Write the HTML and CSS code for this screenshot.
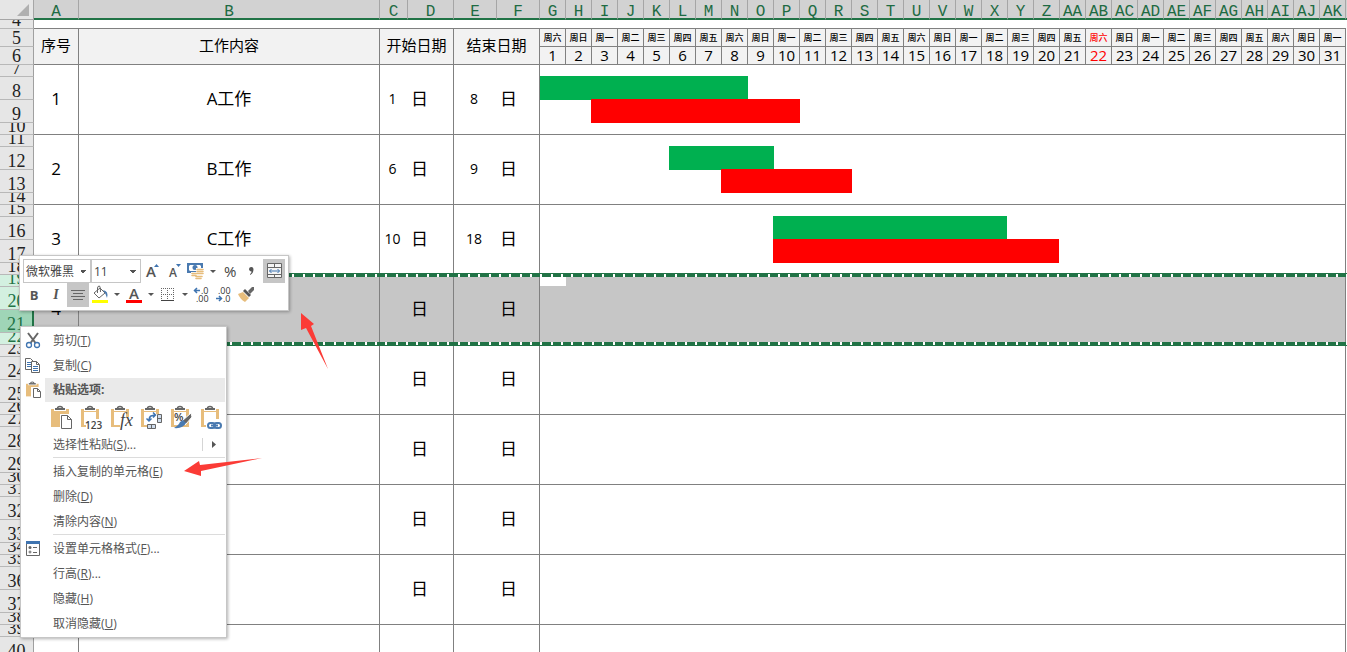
FILE: index.html
```html
<!DOCTYPE html>
<html lang="zh-CN">
<head>
    <meta charset="UTF-8">
    <title>工作计划</title>
    <link rel="stylesheet" href="styles.css">
</head>
<body>
    <div class="sheet-area">
        <table class="sheet" id="sheet">
            <colgroup id="cols">
                <col class="col-head">
                <col class="col-a">
                <col class="col-b">
                <col class="col-c">
                <col class="col-d">
                <col class="col-e">
                <col class="col-f">
            </colgroup>
            <thead>
                <tr class="letters" id="letters">
                    <th class="corner"><svg width="12" height="12"><path d="M12 0V12H0Z" fill="#b0b0b0"/></svg></th>
                </tr>
                <tr class="r9">
                    <th class="num"><div>4</div></th>
                    <td class="blank" colspan="37"></td>
                    <td class="gutter"></td>
                </tr>
                <tr class="r18" id="weekdays">
                    <th class="num"><div>5</div></th>
                    <th class="title" rowspan="2">序号</th>
                    <th class="title" rowspan="2">工作内容</th>
                    <th class="title" rowspan="2" colspan="2">开始日期</th>
                    <th class="title" rowspan="2" colspan="2">结束日期</th>
                </tr>
                <tr class="r18" id="days">
                    <th class="num"><div>6</div></th>
                </tr>
            </thead>
        </table>
    </div>

    <div class="toolbar">
        <div class="tool-row">
            <select class="font-name" aria-label="字体"><option>微软雅黑</option></select>
            <select class="font-size" aria-label="字号"><option>11</option></select>
            <button type="button" aria-label="增大字号">
                <svg width="22" height="24"><text x="5" y="18" font-size="15" font-weight="600" fill="#555">A</text><path d="M13 8L15.500 5L18 8Z" fill="#3f74b0"/></svg>
            </button>
            <button type="button" aria-label="减小字号">
                <svg width="22" height="24"><text x="6" y="18" font-size="12" font-weight="600" fill="#555">A</text><path d="M13 5H18L15.500 8Z" fill="#3f74b0"/></svg>
            </button>
            <button type="button" aria-label="会计数字格式">
                <svg width="22" height="24">
                    <path d="M3 5H17V13H3Z" fill="#fff" stroke="#4a7ab0" stroke-width="2"/>
                    <path d="M3 5H6L3 8ZM17 5H14L17 8ZM3 13V10L6 13Z" fill="#4a7ab0"/>
                    <circle cx="10" cy="8.500" r="2.500" fill="#4a7ab0"/>
                    <path d="M11 9H20V21H6V13H11Z" fill="#fff"/>
                    <path d="M12 10.500H18M12 12.500H18M12 14.500H18M7 14.500H11M7 16.500H11M11 17.500H17M11 19.500H16" stroke="#e7bd7c" stroke-width="1.600" stroke-linecap="round"/>
                </svg>
            </button>
            <button type="button" class="drop" aria-label="更多数字格式"><svg width="12" height="24"><path d="M3 11H9L6 14Z" fill="#555"/></svg></button>
            <button type="button" aria-label="百分比"><svg width="22" height="24"><text x="5" y="18" font-size="15" font-weight="500" fill="#444">%</text></svg></button>
            <button type="button" aria-label="千位分隔"><svg width="22" height="24"><path d="M8 10.500A2.200 2.200 0 0 1 12.500 10C12.500 13 11.500 15 9 16V15C10 14.500 10.500 13.500 10.500 12.500Q8.500 12.500 8 10.500" fill="#555"/></svg></button>
            <button type="button" class="on" aria-label="合并后居中">
                <svg width="22" height="24"><path d="M4.500 4.500H18.500V18.500H4.500ZM4.500 8.500H18.500M4.500 15.500H18.500M11.500 4V8M11.500 16V18" fill="#f4f4f4" stroke="#666"/><path d="M6.500 12H16.500M8.500 10L6.500 12L8.500 14M14.500 10L16.500 12L14.500 14" fill="none" stroke="#3f74b0"/></svg>
            </button>
        </div>
        <div class="tool-row">
            <button type="button" class="bold">B</button>
            <button type="button" class="italic">I</button>
            <button type="button" class="on" aria-label="居中"><svg width="22" height="24"><path d="M4 7.500H18M6 10.500H16M4 13.500H18M6 16.500H16" stroke="#666"/></svg></button>
            <button type="button" aria-label="填充颜色">
                <svg width="22" height="24"><path d="M5 10L11 5L16 10L10 15Z" fill="#fff" stroke="#666"/><path d="M8.500 10V5Q8.500 3 10.500 3Q11.500 3.500 11.500 9" fill="none" stroke="#666"/><path d="M14 7Q20 8 18 15L16.500 11Z" fill="#4a7ab0"/><path d="M3 17H19V20H3Z" fill="#ff0"/></svg>
            </button>
            <button type="button" class="drop" aria-label="更多填充颜色"><svg width="12" height="24"><path d="M3 10H9L6 13Z" fill="#555"/></svg></button>
            <button type="button" aria-label="字体颜色"><svg width="22" height="24"><text x="6" y="16" font-size="15" font-weight="600" fill="#555">A</text><path d="M3 17H19V20H3Z" fill="red"/></svg></button>
            <button type="button" class="drop" aria-label="更多字体颜色"><svg width="12" height="24"><path d="M3 10H9L6 13Z" fill="#555"/></svg></button>
            <button type="button" aria-label="边框"><svg width="22" height="24"><path d="M4.500 5V17M10.500 5V17M16.500 5V17M4 5.500H17M4 11.500H17" stroke="#666" stroke-dasharray="1 1"/><path d="M4 17.500H17" stroke="#444"/></svg></button>
            <button type="button" class="drop" aria-label="更多边框"><svg width="12" height="24"><path d="M3 10H9L6 13Z" fill="#555"/></svg></button>
            <button type="button" aria-label="增加小数位"><svg width="22" height="24"><path d="M3 7.500H9M6 5L3.500 7.500L6 10" fill="none" stroke="#3f74b0" stroke-width="1.500"/><text x="10" y="11" font-size="9" fill="#333">.0</text><text x="5" y="19" font-size="9" fill="#333">.00</text></svg></button>
            <button type="button" aria-label="减少小数位"><svg width="22" height="24"><text x="5" y="11" font-size="9" fill="#333">.00</text><path d="M3 15.500H9M6 13L8.500 15.500L6 18" fill="none" stroke="#3f74b0" stroke-width="1.500"/><text x="10" y="19" font-size="9" fill="#333">.0</text></svg></button>
            <button type="button" aria-label="格式刷">
                <svg width="22" height="24"><path d="M3 11L8 9L14 15L10 19Q5 16 3 11" fill="#e7bd7c"/><path d="M8 8L10 6L16 12L14 14Z" fill="#555"/><path d="M13 8L17 4H19V7L15 11Z" fill="#666"/></svg>
            </button>
        </div>
    </div>

    <div class="menu">
        <button type="button" class="item">
            <svg class="icon" width="24" height="24"><path d="M7 4L14.500 14M17 4L9.500 14" stroke="#666" stroke-width="2"/><circle cx="8" cy="16" r="2.500" fill="none" stroke="#3f74b0" stroke-width="1.300"/><circle cx="16" cy="16" r="2.500" fill="none" stroke="#3f74b0" stroke-width="1.300"/></svg>
            <span>剪切(<u>T</u>)</span>
        </button>
        <button type="button" class="item">
            <svg class="icon" width="24" height="24"><path d="M4.500 4.500H9.500L12.500 7.500V15.500H4.500Z" fill="#fff" stroke="#666"/><path d="M6 8.500H10M6 10.500H10M6 12.500H10" stroke="#3f74b0"/><path d="M10.500 7.500H15.500L18.500 10.500V18.500H10.500Z" fill="#fff" stroke="#666"/><path d="M15.500 7.500V10.500H18" fill="none" stroke="#666"/><path d="M12 12.500H17M12 14.500H17M12 16.500H17" stroke="#3f74b0"/></svg>
            <span>复制(<u>C</u>)</span>
        </button>
        <div class="caption">
            <svg class="icon" width="24" height="24"><use href="#board" transform="translate(5 3) scale(.7)"/><path d="M10 9H20V20H10Z" fill="#fff"/><path d="M12.500 10.500H16.500L19.500 13.500V19.500H12.500Z" fill="#fff" stroke="#666"/><path d="M16.500 10.500V13.500H19" fill="none" stroke="#666"/></svg>
            <span>粘贴选项:</span>
        </div>
        <div class="paste">
            <button type="button" aria-label="粘贴"><svg width="24" height="26">
                <g id="board"><path d="M0 4H18V22H0Z" fill="#e7bd7c"/><path d="M3 2H15V6H3Z" fill="#fff"/><path d="M4 3H14V5H4Z" fill="#666"/><path d="M6.500 3.500Q6.500 1.500 9 1.500Q11.500 1.500 11.500 3.500" fill="none" stroke="#666" stroke-width="1.500"/></g>
                <path d="M9 9H24V26H9Z" fill="#fff"/><path d="M10.500 10.500H16.500L20.500 14.500V23.500H10.500ZM16.500 10.500V14.500H20.500" fill="#fff" stroke="#666"/></svg></button>
            <button type="button" aria-label="值"><svg width="24" height="26"><use href="#board"/><path d="M3 7H15V20H3Z" fill="#fff"/><path d="M5 14H24V26H5Z" fill="#fff"/><text x="4" y="24" font-size="10" font-weight="600" fill="#444">123</text></svg></button>
            <button type="button" aria-label="公式"><svg width="24" height="26"><use href="#board"/><path d="M3 7H15V20H3Z" fill="#fff"/><path d="M9 12H24V26H9Z" fill="#fff"/><text class="fx" x="9" y="21" font-size="18" fill="#444">fx</text></svg></button>
            <button type="button" aria-label="转置"><svg width="24" height="26"><use href="#board"/><path d="M3 7H15V20H3Z" fill="#fff"/><path d="M6 9H24V26H6Z" fill="#fff"/><path d="M16.500 9.500H20.500V17.500H16.500ZM16.500 13.500H20.500M6.500 19.500H14.500V23.500H6.500ZM10.500 19.500V23.500" fill="#cfdcec" stroke="#666"/><path d="M14 10L10 11Q8 12 8 16M12 7.500L14.500 10L12 12.500M5.500 13.500L8 16L10.500 13.500" fill="none" stroke="#3f74b0" stroke-width="1.500"/></svg></button>
            <button type="button" aria-label="格式"><svg width="24" height="26"><use href="#board"/><path d="M3 7H15V20H3Z" fill="#fff"/><text x="3" y="16" font-size="11" font-weight="600" fill="#444">%</text><path d="M20 8L21 12L15 19L11 16Z" fill="#666" stroke="#fff"/><path d="M12 15L15 18Q12 24 3 23Q8 20 9 17Z" fill="#4a7ab0"/></svg></button>
            <button type="button" aria-label="粘贴链接"><svg width="24" height="26"><use href="#board"/><path d="M3 7H15V20H3Z" fill="#fff"/><path d="M5 14H24V26H5Z" fill="#fff"/><g fill="none" stroke="#4a7ab0" stroke-width="2"><rect x="7" y="18" width="7" height="5" rx="2.500"/><rect x="13" y="18" width="7" height="5" rx="2.500"/><path d="M10 20.500H17"/></g></svg></button>
        </div>
        <button type="button" class="item more">
            <span>选择性粘贴(<u>S</u>)...</span>
            <svg class="sub" width="24" height="13"><path d="M0.500 0V13" stroke="#d5d5d5"/><path d="M10 3L14 6.500L10 10Z" fill="#555"/></svg>
        </button>
        <div class="line"></div>
        <button type="button" class="item"><span>插入复制的单元格(<u>E</u>)</span></button>
        <button type="button" class="item"><span>删除(<u>D</u>)</span></button>
        <button type="button" class="item"><span>清除内容(<u>N</u>)</span></button>
        <div class="line"></div>
        <button type="button" class="item">
            <svg class="icon" width="24" height="24"><path d="M5.500 4.500H18.500V18.500H5.500Z" fill="#fff" stroke="#666"/><path d="M5 4H19V7H5Z" fill="#3f74b0"/><circle cx="9" cy="10.500" r="1.500" fill="#666"/><circle cx="9" cy="15" r="1" fill="none" stroke="#666"/><path d="M12 10.500H16M12 15.500H16" stroke="#666"/></svg>
            <span>设置单元格格式(<u>F</u>)...</span>
        </button>
        <button type="button" class="item"><span>行高(<u>R</u>)...</span></button>
        <button type="button" class="item"><span>隐藏(<u>H</u>)</span></button>
        <button type="button" class="item"><span>取消隐藏(<u>U</u>)</span></button>
    </div>

    <svg class="arrow arrow-up" width="30" height="58"><path d="M1 1L14 12L11 14L28 57L6 16L1 18Z" fill="#fb3b36"/></svg>
    <svg class="arrow arrow-left" width="80" height="22"><path d="M0 14L15 4L16 8L78 1L17 14L17 19Z" fill="#fb3b36"/></svg>

    <script>
        const week = ["六", "日", "一", "二", "三", "四", "五"];
        const tasks = [
            { no: 1, name: "A工作", start: 1, end: 8, unit: "日", plan: [1, 8], real: [3, 10] },
            { no: 2, name: "B工作", start: 6, end: 9, unit: "日", plan: [6, 9], real: [8, 12] },
            { no: 3, name: "C工作", start: 10, end: 18, unit: "日", plan: [10, 18], real: [10, 20] },
            { no: 4, unit: "日", selected: true },
            { unit: "日" },
            { unit: "日" },
            { unit: "日" },
            { unit: "日" },
            {}
        ];
        const heights = ["r12", "r23", "r23", "r12"];

        // Column letters, A to AK
        function letter(i) {
            return (i >= 26 ? "A" : "") + String.fromCharCode(65 + i % 26);
        }

        let letters = "";
        for (let i = 0; i < 37; i++) {
            letters += `<th>${letter(i)}</th>`;
        }
        document.getElementById("letters").insertAdjacentHTML("beforeend", letters + `<th class="gutter"></th>`);

        // Calendar header
        let cols = "", weekdays = "", days = "";
        for (let d = 1; d <= 31; d++) {
            const today = d === 22 ? " today" : "";
            cols += `<col>`;
            weekdays += `<th class="week${today}">周${week[(d - 1) % 7]}</th>`;
            days += `<th class="day${today}">${d}</th>`;
        }
        document.getElementById("cols").insertAdjacentHTML("beforeend", cols + `<col class="col-gutter">`);
        document.getElementById("weekdays").insertAdjacentHTML("beforeend", weekdays);
        document.getElementById("days").insertAdjacentHTML("beforeend", days);

        function bar(type, range) {
            return range ? `<div class="bar ${type}" style="grid-column: ${range[0]} / ${range[1] + 1}"></div>` : "";
        }

        // Each task takes four sheet rows, the last one runs off the window
        tasks.forEach((task, i) => {
            const rowClasses = i === tasks.length - 1 ? heights.slice(0, 2) : heights;
            const span = rowClasses.length;
            let rows = "";
            rowClasses.forEach((h, k) => {
                const n = 7 + i * 4 + k;
                rows += `<tr class="${h}"><th class="num${n === 21 ? " current" : ""}"><div>${n}</div></th>`;
                if (k === 0) {
                    rows += `<td rowspan="${span}">${task.no || ""}</td>
                        <td rowspan="${span}">${task.name || ""}</td>
                        <td rowspan="${span}" class="date">${task.start || ""}</td>
                        <td rowspan="${span}" class="unit">${task.unit || ""}</td>
                        <td rowspan="${span}" class="date">${task.end || ""}</td>
                        <td rowspan="${span}" class="unit">${task.unit || ""}</td>
                        <td rowspan="${span}" colspan="31" class="chart">`;
                    if (task.unit) {
                        rows += `<div class="bars">${task.selected ? `<div class="active"></div>` : ""}${bar("plan", task.plan)}${bar("real", task.real)}</div>`;
                    }
                    rows += `</td>`;
                }
                rows += `</tr>`;
            });
            document.getElementById("sheet").insertAdjacentHTML("beforeend",
                `<tbody class="${task.selected ? "selected" : ""}">${rows}</tbody>`);
        });
    </script>
</body>
</html>
```
FILE: styles.css
```css
* {
    box-sizing: border-box;
}

body {
    margin: 0;
    background: #fff;
    color: #000;
    font-family: "Open Sans", "Noto Sans CJK SC", sans-serif;
}

button {
    padding: 0;
    border: 0;
    background: none;
    color: #555;
    font: inherit;
}

svg {
    display: block;
}

/* Sheet */
.sheet-area {
    height: 100vh;
    overflow: hidden;
}

.sheet {
    width: 100%;
    table-layout: fixed;
    border-collapse: separate;
    border-spacing: 0;
}

.col-head { width: 34px; }
.col-a { width: 45px; }
.col-b { width: 301px; }
.col-c { width: 28px; }
.col-d { width: 46px; }
.col-e { width: 43px; }
.col-f { width: 43px; }
.col-gutter { width: 1px; }

.sheet th,
.sheet td {
    padding: 0;
    border-right: 1px solid #808080;
    border-bottom: 1px solid #808080;
    font-size: 17px;
    font-weight: normal;
    line-height: 17px;
    text-align: center;
    white-space: nowrap;
}

.sheet tbody td {
    padding-bottom: 2px;
}

.r9 { height: 9px; }
.r12 { height: 12px; }
.r18 { height: 18px; }
.r23 { height: 23px; }

.letters {
    height: 20px;
}

.sheet .letters th {
    padding-top: 7px;
    border-right: 1px solid #a6a6a6;
    border-bottom: 2px solid #217346;
    background: #d2d2d2;
    color: #1e6b43;
    font-family: "Liberation Mono", monospace;
    font-size: 16px;
    line-height: 11px;
    vertical-align: top;
}

.sheet .letters .corner {
    padding: 4px 4px 2px 17px;
    border-bottom: 1px solid #a6a6a6;
    background: #e6e6e6;
}

.sheet .gutter,
.sheet .letters .gutter {
    border-right: 0;
}

.sheet td.gutter {
    border-bottom: 0;
}

.sheet .blank {
    border-right: 0;
}

.sheet .num {
    border-right-color: #a0a0a0;
    border-bottom-color: #b8b8b8;
    background: #e6e6e6;
    color: #222;
    font-family: "Liberation Serif", serif;
    font-size: 18px;
    line-height: 16px;
    vertical-align: bottom;
}

.num div {
    display: flex;
    align-items: flex-end;
    justify-content: center;
    overflow: hidden;
}

.r9 .num div { height: 8px; }
.r12 .num div { height: 11px; }
.r18 .num div { height: 17px; }
.r23 .num div { height: 22px; }

.sheet .title,
.sheet .week,
.sheet .day {
    background: #f2f2f2;
    font-size: 15px;
}

.sheet .title {
    padding-bottom: 2px;
}

.sheet .week {
    font-size: 9px;
    font-weight: 500;
}

.sheet .today {
    color: red;
}

.sheet .date {
    padding-right: 3px;
    border-right: 0;
    font-size: 14px;
}

.sheet .unit {
    padding-left: 3px;
    text-align: left;
}

.sheet .chart {
    vertical-align: top;
}

.bars {
    display: grid;
    grid-template-columns: repeat(31, 1fr);
    grid-template-rows: 11px 23px 24px;
    overflow: hidden;
}

.bar {
    height: 24px;
    margin-left: -1px;
}

.plan {
    grid-row: 2;
    background: #00b050;
}

.real {
    grid-row: 3;
    background: #f00;
}

/* Copied rows with the marching border */
.selected {
    position: relative;
}

.selected td {
    background: #c6c6c6;
}

.sheet .selected .num {
    background: #d3f0e0;
    color: #217346;
}

.sheet .selected .current {
    border-right: 2px solid #217346;
    background: #9fd5b7;
}

.selected::before,
.selected::after {
    content: "";
    position: absolute;
    left: 34px;
    right: 0;
    height: 3px;
    background: repeating-linear-gradient(90deg, #fff 0 2px, #217346 2px 10px, #fff 10px 12px, #217346 12px 21px, #fff 21px 23px, #217346 23px 31px);
}

.selected::before {
    top: -2px;
    border-top: 1px solid #217346;
}

.selected::after {
    bottom: -1px;
    border-bottom: 1px solid #217346;
}

.active {
    grid-row: 1;
    grid-column: 1;
    margin-top: 1px;
    background: #fff;
}

/* Floating toolbar */
.toolbar {
    position: absolute;
    left: 19px;
    top: 255px;
    padding: 3px;
    border: 1px solid #c6c6c6;
    background: #fff;
    box-shadow: 1px 1px 3px rgba(0, 0, 0, 0.3);
}

.tool-row {
    display: flex;
    height: 24px;
}

.tool-row button {
    width: 22px;
}

.tool-row .drop {
    width: 12px;
}

.tool-row .on {
    background: #c6c6c6;
}

.tool-row select {
    appearance: none;
    padding: 0 2px;
    border: 1px solid #c6c6c6;
    border-radius: 0;
    background: conic-gradient(from -45deg at 50% 100%, #555 90deg, transparent 0) no-repeat right 4px center / 6px 3px;
    color: #444;
    font-family: inherit;
    font-size: 12px;
}

.font-name {
    width: 68px;
}

.font-size {
    width: 50px;
}

.tool-row .bold {
    font-size: 13px;
    font-weight: bold;
}

.tool-row .italic {
    font-family: "Liberation Serif", serif;
    font-size: 14px;
    font-style: italic;
    font-weight: bold;
}

/* Right click menu */
.menu {
    position: absolute;
    left: 20px;
    top: 326px;
    width: 207px;
    padding: 1px 0;
    border: 1px solid #c6c6c6;
    background: #fff;
    box-shadow: 1px 1px 3px rgba(0, 0, 0, 0.3);
    color: #555;
    font-size: 12px;
}

.item,
.caption {
    display: flex;
    align-items: center;
    width: 100%;
    height: 25px;
    line-height: 16px;
}

.item span,
.caption span {
    padding-left: 8px;
}

.item span:first-child {
    padding-left: 32px;
}

.caption {
    height: 24px;
    border-right: 1px solid #fff;
    background: linear-gradient(90deg, #fff 24px, #eaeaea 24px);
    font-weight: bold;
}

.paste {
    display: flex;
    gap: 6px;
    height: 30px;
    padding: 3px 0 0 30px;
}

.paste button {
    width: 24px;
    height: 26px;
}

.fx {
    font-family: "Liberation Serif", serif;
    font-style: italic;
}

.more {
    justify-content: space-between;
}

.line {
    height: 2px;
    margin: 0 1px 0 32px;
    border-top: 1px solid #dcdcdc;
}

.arrow {
    position: absolute;
}

.arrow-up {
    left: 300px;
    top: 312px;
}

.arrow-left {
    left: 184px;
    top: 457px;
}
```
